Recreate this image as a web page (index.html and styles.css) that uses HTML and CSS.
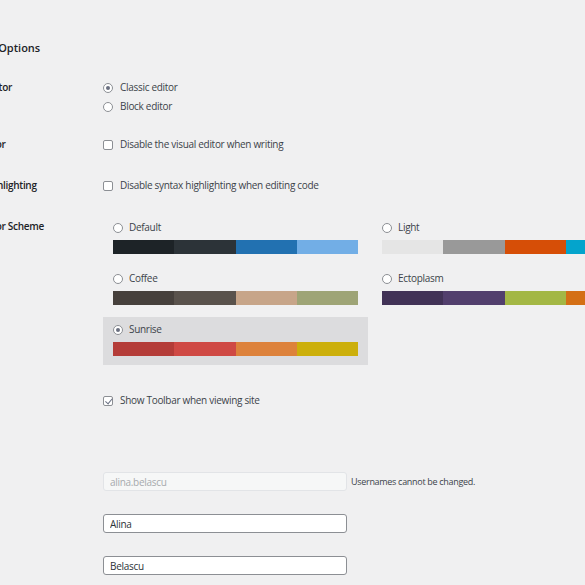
FILE: index.html
```html
<!DOCTYPE html>
<html lang="en">
<head>
    <meta charset="UTF-8">
    <meta name="viewport" content="width=device-width, initial-scale=1.0">
    <title>Profile</title>
    <link rel="stylesheet" href="styles.css">
</head>
<body>
    <div class="wrap">
        <!-- Personal Options -->
        <h2 class="section-title">Personal Options</h2>

        <div class="form-table">
            <div class="form-row row-editor">
                <div class="row-label">Default Editor</div>
                <div class="row-field">
                    <label class="choice"><input type="radio" name="editor" checked>Classic editor</label>
                    <label class="choice"><input type="radio" name="editor">Block editor</label>
                </div>
            </div>

            <div class="form-row row-visual">
                <div class="row-label">Visual Editor</div>
                <div class="row-field">
                    <label class="choice"><input type="checkbox">Disable the visual editor when writing</label>
                </div>
            </div>

            <div class="form-row row-syntax">
                <div class="row-label">Syntax Highlighting</div>
                <div class="row-field">
                    <label class="choice"><input type="checkbox">Disable syntax highlighting when editing code</label>
                </div>
            </div>

            <div class="form-row row-colors">
                <div class="row-label label-colors">Admin Color Scheme</div>
                <div class="color-picker" id="color-picker"></div>
            </div>

            <div class="form-row row-toolbar">
                <div class="row-label">Toolbar</div>
                <div class="row-field">
                    <label class="choice"><input type="checkbox" checked>Show Toolbar when viewing site</label>
                </div>
            </div>
        </div>

        <!-- Name -->
        <h2 class="section-title title-name">Name</h2>

        <div class="form-table">
            <div class="form-row row-input">
                <div class="row-label">Username</div>
                <div class="row-field row-inline">
                    <input type="text" class="text-input" value="alina.belascu" disabled>
                    <span class="description">Usernames cannot be changed.</span>
                </div>
            </div>

            <div class="form-row row-input">
                <div class="row-label">First Name</div>
                <div class="row-field">
                    <input type="text" class="text-input" value="Alina">
                </div>
            </div>

            <div class="form-row row-input">
                <div class="row-label">Last Name</div>
                <div class="row-field">
                    <input type="text" class="text-input" value="Belascu">
                </div>
            </div>
        </div>
    </div>

    <script>
        // admin color schemes
        const schemes = [
            { name: "Default", colors: ["#1d2327", "#2c3338", "#2271b1", "#72aee6"] },
            { name: "Light", colors: ["#e5e5e5", "#999999", "#d64e07", "#04a4cc"] },
            { name: "Coffee", colors: ["#46403c", "#59524c", "#c7a589", "#9ea476"] },
            { name: "Ectoplasm", colors: ["#413256", "#523f6d", "#a3b745", "#d46f15"] },
            { name: "Sunrise", colors: ["#b43c38", "#cf4944", "#dd823b", "#ccaf0b"], selected: true }
        ];

        const picker = document.getElementById('color-picker');

        schemes.forEach(scheme => {
            const option = document.createElement('div');
            option.className = 'color-option' + (scheme.selected ? ' selected' : '');

            const cells = scheme.colors
                .map(c => `<span class="palette-cell" style="background:${c}"></span>`)
                .join('');

            option.innerHTML = `
                <label class="choice option-label">
                    <input type="radio" name="admin_color" ${scheme.selected ? 'checked' : ''}>${scheme.name}
                </label>
                <div class="palette">${cells}</div>
            `;

            picker.appendChild(option);
        });
    </script>
</body>
</html>
```

FILE: styles.css
```css
/* base */
html, body {
    margin: 0;
    overflow: hidden;
}

body {
    width: 585px;
    height: 585px;
    background: #f0f0f1;
    font-family: 'Open Sans', 'Noto Sans', sans-serif;
    font-size: 10px;
    letter-spacing: -0.3px;
    color: #3c434a;
}

/* page is scrolled a little to the right, labels run off the left edge */
.wrap {
    margin-left: -51px;
}

/* section headings */
.section-title {
    margin: 40px 0 12px;
    font-size: 11px;
    line-height: 16px;
    font-weight: 600;
    letter-spacing: 0;
    color: #1d2327;
}

.title-name {
    margin: 13px 0 11px;
}

/* form rows */
.form-row {
    display: flex;
    padding: 10px 0;
}

.row-label {
    width: 154px;
    flex: none;
    font-weight: 600;
    color: #1d2327;
    line-height: 19px;
}

.row-field {
    display: flex;
    flex-direction: column;
}

.row-inline {
    flex-direction: row;
    align-items: center;
    gap: 4px;
}

.row-editor {
    padding-bottom: 9px;
}

.row-visual {
    padding-bottom: 12px;
}

.row-colors {
    padding-top: 10px;
}

.label-colors {
    padding-top: 2px;
}

.row-toolbar {
    padding-top: 16px;
}

.row-input {
    padding: 12px 0 11px;
}

/* radios and checkboxes */
.choice {
    display: flex;
    align-items: center;
    gap: 7px;
    line-height: 19px;
    white-space: nowrap;
}

.choice input {
    appearance: none;
    -webkit-appearance: none;
    margin: 0;
    width: 10px;
    height: 10px;
    flex: none;
    border: 1px solid #8c8f94;
    background: #fff;
    position: relative;
    box-sizing: border-box;
}

.choice input[type="radio"] {
    border-radius: 50%;
}

.choice input[type="checkbox"] {
    border-radius: 2px;
}

.choice input[type="radio"]:checked::before {
    content: "";
    position: absolute;
    left: 2px;
    top: 2px;
    width: 4px;
    height: 4px;
    border-radius: 50%;
    background: #6a6f80;
}

.choice input[type="checkbox"]:checked::before {
    content: "";
    position: absolute;
    left: 2.5px;
    top: 0;
    width: 3px;
    height: 5.5px;
    border-right: 1.5px solid #6a7184;
    border-bottom: 1.5px solid #6a7184;
    transform: rotate(40deg);
}

/* color scheme picker */
.color-picker {
    display: grid;
    grid-template-columns: 265px 265px;
    column-gap: 4px;
    row-gap: 3px;
}

.color-option {
    padding: 4px 10px 9px;
}

.color-option.selected {
    background: #dcdcde;
}

.option-label {
    line-height: 17px;
    gap: 6px;
}

.palette {
    display: flex;
    height: 14px;
    margin-top: 4px;
}

.palette-cell {
    flex: 1;
}

/* text inputs */
.text-input {
    width: 244px;
    height: 19px;
    box-sizing: border-box;
    margin: 0;
    padding: 0 6px;
    border: 1px solid #8c8f94;
    border-radius: 3px;
    background: #fff;
    font-family: 'Open Sans', 'Noto Sans', sans-serif;
    font-size: 10px;
    letter-spacing: -0.3px;
    color: #2c3338;
}

.text-input:disabled {
    background: #f6f7f7;
    border-color: #e2e4e7;
    color: #a7aaad;
}

.description {
    font-size: 9px;
    color: #3c434a;
    white-space: nowrap;
}
```
